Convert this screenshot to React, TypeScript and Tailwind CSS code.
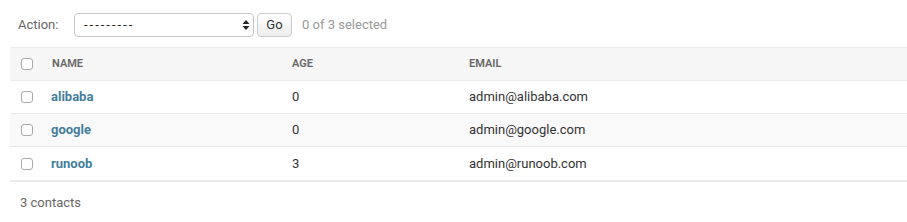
const rows = [
  { name: "alibaba", age: 0, email: "admin@alibaba.com" },
  { name: "google", age: 0, email: "admin@google.com" },
  { name: "runoob", age: 3, email: "admin@runoob.com" },
];

function Checkbox() {
  return <span className="block w-[12px] h-[12px] rounded-[3px] border border-[#a9a9a9] bg-white" />;
}

export default function App() {
  return (
    <div className="w-[907px] h-[222px] bg-white text-[13px] text-[#333] font-['Roboto',sans-serif]">
      <div className="flex items-center h-[47px] pl-[18px] pt-[2px]">
        <span className="text-[#666] w-[56px]">Action:</span>
        <div className="w-[180px] h-[24px] rounded-[4px] border border-[#c8c8c8] bg-white flex items-center pl-[9px] pr-[3px]">
          <span className="flex-1 text-[#222] tracking-[2px]">---------</span>
          <svg width="8" height="12" viewBox="0 0 8 12" className="text-[#222]">
            <path d="M4 1 L7.5 5 H0.5 Z M4 11 L7.5 7 H0.5 Z" fill="currentColor" />
          </svg>
        </div>
        <button className="ml-[3px] h-[24px] w-[35px] rounded-[4px] border border-[#ccc] bg-gradient-to-b from-white to-[#ededed] text-[#333]">
          Go
        </button>
        <span className="ml-[10px] text-[#999]">0 of 3 selected</span>
      </div>

      <div className="ml-[10px] w-[897px] border-b-2 border-[#eaeaea]">
        <div className="grid grid-cols-[32px_240px_177px_1fr] h-[34px] items-center bg-[#f6f6f6] border-y border-[#eaeaea]">
          <div className="pl-[11px]"><Checkbox /></div>
          <div className="pl-[10px] text-[11px] font-semibold text-[#666] uppercase">Name</div>
          <div className="pl-[10px] text-[11px] font-semibold text-[#666] uppercase">Age</div>
          <div className="pl-[10px] text-[11px] font-semibold text-[#666] uppercase">Email</div>
        </div>
        {rows.map((r, i) => (
          <div
            key={r.name}
            className={`grid grid-cols-[32px_240px_177px_1fr] h-[33px] items-center ${i % 2 === 1 ? "bg-[#f9f9f9]" : "bg-white"} ${i < rows.length - 1 ? "border-b border-[#eaeaea]" : ""}`}
          >
            <div className="pl-[11px]"><Checkbox /></div>
            <div className="pl-[9px] font-bold text-[#447e9b]">{r.name}</div>
            <div className="pl-[10px]">{r.age}</div>
            <div className="pl-[10px]">{r.email}</div>
          </div>
        ))}
      </div>

      <div className="pl-[20px] pt-[11px] text-[#666]">3 contacts</div>
    </div>
  );
}
